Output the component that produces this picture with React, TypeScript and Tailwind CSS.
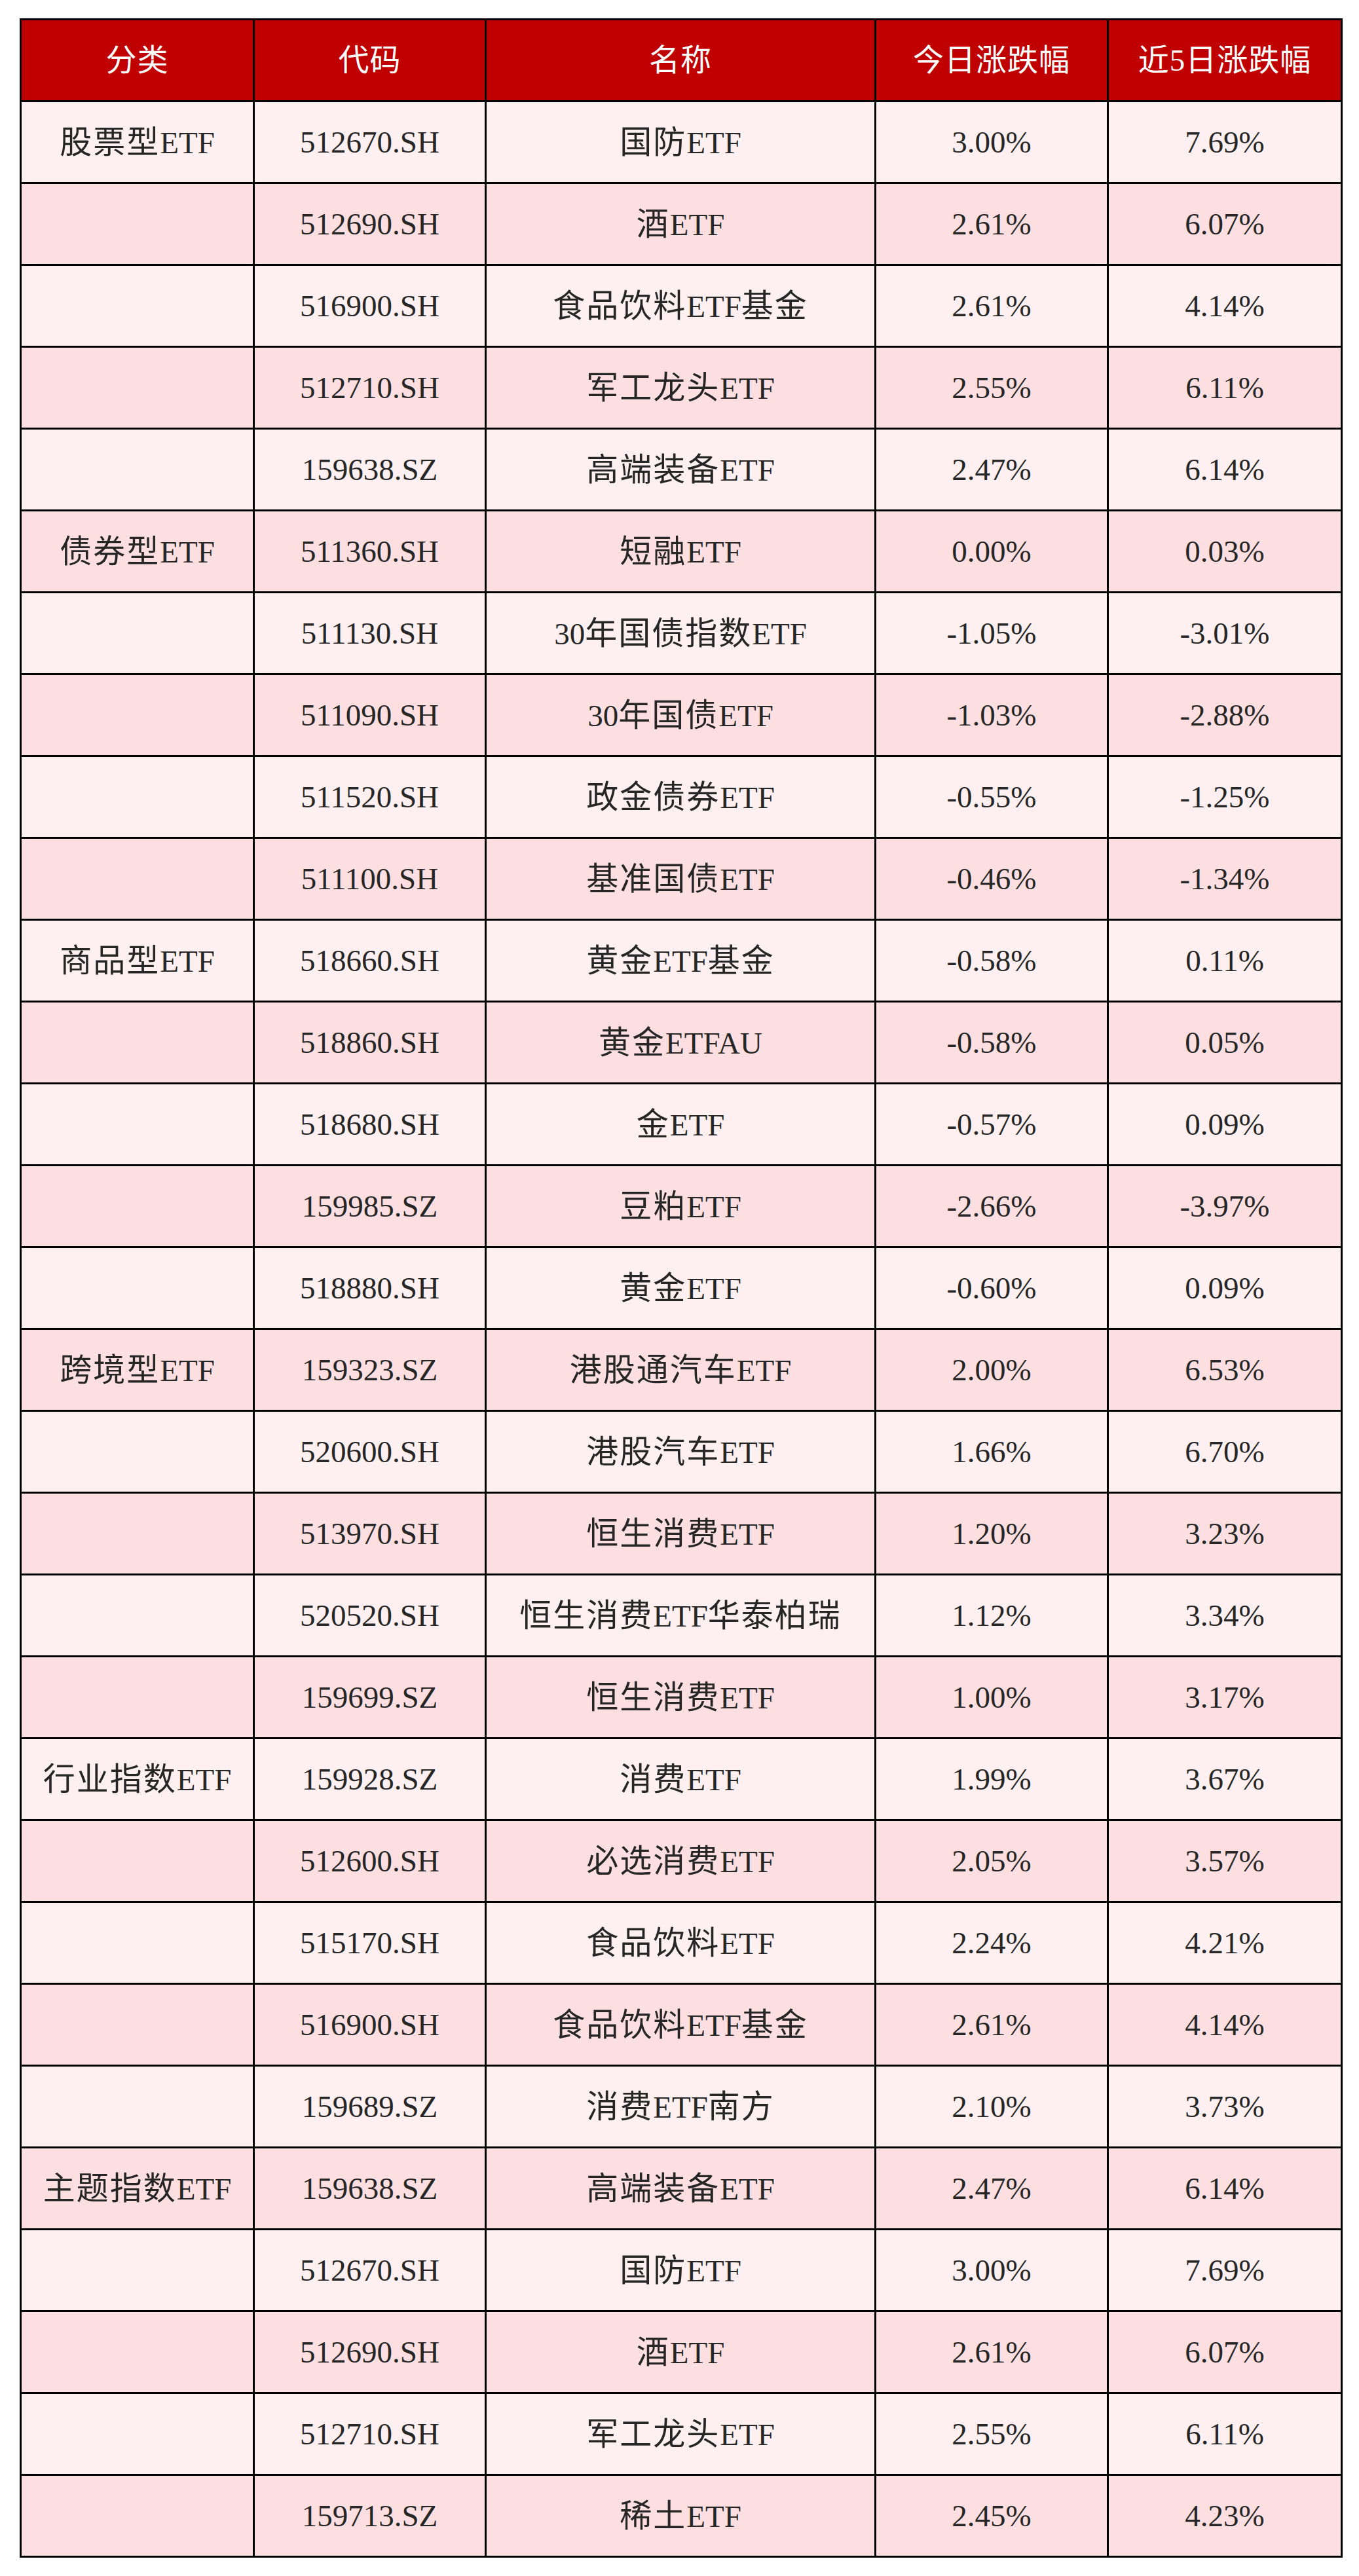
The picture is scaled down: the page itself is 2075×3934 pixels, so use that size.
import React from "react";

type Row = {
  cat: string;
  code: string;
  name: string;
  today: string;
  five: string;
};

const rows: Row[] = [
  { cat: "股票型ETF", code: "512670.SH", name: "国防ETF", today: "3.00%", five: "7.69%" },
  { cat: "", code: "512690.SH", name: "酒ETF", today: "2.61%", five: "6.07%" },
  { cat: "", code: "516900.SH", name: "食品饮料ETF基金", today: "2.61%", five: "4.14%" },
  { cat: "", code: "512710.SH", name: "军工龙头ETF", today: "2.55%", five: "6.11%" },
  { cat: "", code: "159638.SZ", name: "高端装备ETF", today: "2.47%", five: "6.14%" },
  { cat: "债券型ETF", code: "511360.SH", name: "短融ETF", today: "0.00%", five: "0.03%" },
  { cat: "", code: "511130.SH", name: "30年国债指数ETF", today: "-1.05%", five: "-3.01%" },
  { cat: "", code: "511090.SH", name: "30年国债ETF", today: "-1.03%", five: "-2.88%" },
  { cat: "", code: "511520.SH", name: "政金债券ETF", today: "-0.55%", five: "-1.25%" },
  { cat: "", code: "511100.SH", name: "基准国债ETF", today: "-0.46%", five: "-1.34%" },
  { cat: "商品型ETF", code: "518660.SH", name: "黄金ETF基金", today: "-0.58%", five: "0.11%" },
  { cat: "", code: "518860.SH", name: "黄金ETFAU", today: "-0.58%", five: "0.05%" },
  { cat: "", code: "518680.SH", name: "金ETF", today: "-0.57%", five: "0.09%" },
  { cat: "", code: "159985.SZ", name: "豆粕ETF", today: "-2.66%", five: "-3.97%" },
  { cat: "", code: "518880.SH", name: "黄金ETF", today: "-0.60%", five: "0.09%" },
  { cat: "跨境型ETF", code: "159323.SZ", name: "港股通汽车ETF", today: "2.00%", five: "6.53%" },
  { cat: "", code: "520600.SH", name: "港股汽车ETF", today: "1.66%", five: "6.70%" },
  { cat: "", code: "513970.SH", name: "恒生消费ETF", today: "1.20%", five: "3.23%" },
  { cat: "", code: "520520.SH", name: "恒生消费ETF华泰柏瑞", today: "1.12%", five: "3.34%" },
  { cat: "", code: "159699.SZ", name: "恒生消费ETF", today: "1.00%", five: "3.17%" },
  { cat: "行业指数ETF", code: "159928.SZ", name: "消费ETF", today: "1.99%", five: "3.67%" },
  { cat: "", code: "512600.SH", name: "必选消费ETF", today: "2.05%", five: "3.57%" },
  { cat: "", code: "515170.SH", name: "食品饮料ETF", today: "2.24%", five: "4.21%" },
  { cat: "", code: "516900.SH", name: "食品饮料ETF基金", today: "2.61%", five: "4.14%" },
  { cat: "", code: "159689.SZ", name: "消费ETF南方", today: "2.10%", five: "3.73%" },
  { cat: "主题指数ETF", code: "159638.SZ", name: "高端装备ETF", today: "2.47%", five: "6.14%" },
  { cat: "", code: "512670.SH", name: "国防ETF", today: "3.00%", five: "7.69%" },
  { cat: "", code: "512690.SH", name: "酒ETF", today: "2.61%", five: "6.07%" },
  { cat: "", code: "512710.SH", name: "军工龙头ETF", today: "2.55%", five: "6.11%" },
  { cat: "", code: "159713.SZ", name: "稀土ETF", today: "2.45%", five: "4.23%" },
];

const headers = ["分类", "代码", "名称", "今日涨跌幅", "近5日涨跌幅"];
const widths = ["w-[356px]", "w-[354px]", "w-[595px]", "w-[355px]", "w-[357px]"];

// split into CJK / latin runs so the Chinese glyphs can be a bit larger and spaced out
function Mixed({ text }: { text: string }) {
  const parts = text.match(/[\u4e00-\u9fff]+|[^\u4e00-\u9fff]+/g) ?? [];
  return (
    <>
      {parts.map((p, i) =>
        /[\u4e00-\u9fff]/.test(p) ? (
          <span key={i} className="text-[49px] tracking-[2px]">
            {p}
          </span>
        ) : (
          <span key={i}>{p}</span>
        )
      )}
    </>
  );
}

export default function App() {
  return (
    <div className="bg-white pl-[30px] pt-[28px] pb-[28px] font-['Liberation_Serif','Noto_Sans_CJK_SC',serif]">
      <table className="w-[2017px] table-fixed border-collapse text-[47px] leading-none">
        <thead>
          <tr>
            {headers.map((h, i) => (
              <th
                key={h}
                className={`${widths[i]} h-[125px] border-[3px] border-black bg-[#c00000] text-center font-normal text-white tracking-[1px]`}
              >
                {h}
              </th>
            ))}
          </tr>
        </thead>
        <tbody>
          {rows.map((r, idx) => (
            <tr key={idx} className={idx % 2 === 0 ? "bg-[#fef0f0]" : "bg-[#fddfe1]"}>
              {[r.cat, r.code, r.name, r.today, r.five].map((v, j) => (
                <td
                  key={j}
                  className="h-[125px] border-[3px] border-black text-center text-[#262626]"
                >
                  <Mixed text={v} />
                </td>
              ))}
            </tr>
          ))}
        </tbody>
      </table>
    </div>
  );
}
